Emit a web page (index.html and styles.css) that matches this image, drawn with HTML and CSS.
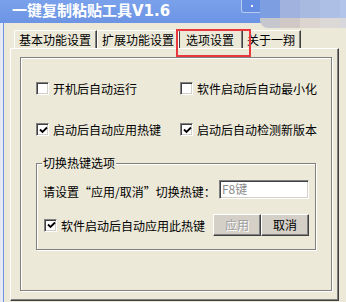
FILE: index.html
```html
<!DOCTYPE html>
<html lang="zh-CN">
<head>
    <meta charset="UTF-8">
    <title>一键复制粘贴工具V1.6</title>
    <link rel="stylesheet" href="styles.css">
</head>
<body>
    <div class="window">
        <div class="titlebar">
            <span class="title">一键复制粘贴工具V1.6</span>
            <span class="tb-btn"><i></i></span>
        </div>

        <!-- pixelated corner of the screenshot -->
        <div class="mosaic">
            <span class="m1"></span><span class="m2"></span><span class="m3"></span><span class="m4"></span><span class="m5"></span>
            <span class="m6"></span><span class="m7"></span><span class="m8"></span><span class="m9"></span><span class="m10"></span>
        </div>

        <div class="frame">
            <div class="tabs">
                <div class="tab">基本功能设置</div>
                <div class="tab">扩展功能设置</div>
                <div class="tab active">选项设置</div>
                <div class="tab">关于一翔</div>
            </div>

            <div class="panel">
                <div class="inner">
                    <div class="opts">
                        <label class="chk"><span class="box"></span>开机后自动运行</label>
                        <label class="chk"><span class="box"></span>软件启动后自动最小化</label>
                        <label class="chk"><span class="box checked"><svg viewBox="0 0 9 9"><path d="M1 3.5 L3.5 6 L8 1.5"/></svg></span>启动后自动应用热键</label>
                        <label class="chk"><span class="box checked"><svg viewBox="0 0 9 9"><path d="M1 3.5 L3.5 6 L8 1.5"/></svg></span>启动后自动检测新版本</label>
                    </div>

                    <fieldset class="group">
                        <legend>切换热键选项</legend>
                        <div class="hotkey-row">
                            <span class="hotkey-label">请设置“应用/取消”切换热键：</span>
                            <span class="input">F8键</span>
                        </div>
                        <div class="apply-row">
                            <label class="chk"><span class="box checked"><svg viewBox="0 0 9 9"><path d="M1 3.5 L3.5 6 L8 1.5"/></svg></span>软件启动后自动应用此热键</label>
                            <div class="btns">
                                <button class="btn" disabled>应用</button>
                                <button class="btn">取消</button>
                            </div>
                        </div>
                    </fieldset>
                </div>
            </div>
        </div>
    </div>
</body>
</html>
```

FILE: styles.css
```css
* {
    box-sizing: border-box;
}

body {
    margin: 0;
    font-family: "Noto Sans CJK SC", sans-serif;
    font-size: 12px;
    color: #000;
    background: #ece9d8;
}

.window {
    position: relative;
    width: 346px;
    height: 302px;
    display: flex;
    flex-direction: column;
    overflow: hidden;
    background: #ece9d8;
}

/* title bar */
.titlebar {
    height: 23px;
    display: flex;
    align-items: flex-start;
    padding-left: 12px;
    background: linear-gradient(#7aa1ea, #6c94e4);
}

.title {
    font-family: "DejaVu Sans", "Noto Sans CJK SC", sans-serif;
    font-weight: bold;
    font-size: 15px;
    line-height: 22px;
    color: #fff;
}

.tb-btn {
    position: relative;
    width: 20px;
    height: 13px;
    margin-left: auto;
    margin-right: 85px;
    border: 1px solid #b8ccf2;
    border-top: 0;
    border-bottom-left-radius: 3px;
    background: #658de2;
}

.tb-btn i {
    position: absolute;
    left: 9px;
    top: 5px;
    width: 2px;
    height: 2px;
    background: #fff;
}

.mosaic {
    position: absolute;
    top: 0;
    right: 0;
    width: 86px;
    display: grid;
    grid-template-columns: 20px 20px 20px 20px 6px;
    grid-template-rows: 18px 10px;
}

.m1 { background: #7d9fe2; }
.m2 { background: #a1b2de; }
.m3 { background: #a8badf; }
.m4 { background: #adbfe5; }
.m5 { background: #b3c4ea; }
.m6 { background: #c6c7cd; border-bottom-left-radius: 8px; }
.m7 { background: #cfc8c5; }
.m8 { background: #dcd4cf; }
.m9 { background: #dcd8d6; }
.m10 { background: #d7d7dc; }

/* window body */
.frame {
    flex: 1;
    display: flex;
    flex-direction: column;
    border-left: 3px solid #e6e9f6;
    box-shadow: inset 1px 0 0 #7090e0;
}

.tabs {
    display: flex;
    margin: 7px 0 0 11px;
    height: 18px;
}

.tab {
    position: relative;
    height: 18px;
    line-height: 17px;
    padding: 0 5px 0 4px;
    border-top: 1px solid #fff;
    border-left: 1px solid #fff;
    border-right: 1px solid #404040;
    border-top-left-radius: 2px;
    box-shadow: inset -1px 0 0 #808080;
    white-space: nowrap;
}

.tab.active {
    margin: 0 -1px 0 -2px;
    padding: 0 8px 0 7px;
    z-index: 1;
}

/* red highlight drawn on the screenshot */
.tab.active::after {
    content: "";
    position: absolute;
    left: -3px;
    top: -2px;
    width: 71px;
    height: 24px;
    border: 2px solid #e8383d;
}

.panel {
    width: 329px;
    height: 253px;
    margin-left: 7px;
    display: flex;
    flex-direction: column;
    padding: 8px 6px 9px 9px;
    border-top: 1px solid #fff;
    border-left: 1px solid #fff;
    border-right: 1px solid #404040;
    border-bottom: 1px solid #404040;
    box-shadow: inset -1px -1px 0 #808080;
}

.inner {
    flex: 1;
    padding: 24px 0 0 15px;
    border: 1px solid #808080;
    box-shadow: inset 1px 1px 0 #fff, 1px 1px 0 #fff;
}

.opts {
    display: grid;
    grid-template-columns: 144px auto;
    row-gap: 28px;
}

.chk {
    display: flex;
    align-items: center;
    height: 13px;
    line-height: 13px;
    white-space: nowrap;
}

.box {
    width: 13px;
    height: 13px;
    margin-right: 4px;
    flex: none;
    display: flex;
    align-items: center;
    justify-content: center;
    background: #fff;
    border: 1px solid;
    border-color: #808080 #fff #fff #808080;
    box-shadow: inset 1px 1px 0 #404040, inset -1px -1px 0 #d4d0c8;
}

.box svg {
    width: 9px;
    height: 9px;
    margin: 1px 0 0 1px;
}

.box svg path {
    fill: none;
    stroke: #000;
    stroke-width: 1.8;
}

/* hotkey group */
.group {
    width: 280px;
    margin: 20px 0 0 0;
    padding: 10px 6px 13px 6px;
    min-width: 0;
    border: 1px solid #808080;
    box-shadow: inset 1px 1px 0 #fff, 1px 1px 0 #fff;
}

.group legend {
    padding: 0 1px;
    margin-left: -1px;
    line-height: 14px;
    background: #ece9d8;
}

.hotkey-row {
    display: flex;
    justify-content: space-between;
    height: 19px;
}

.hotkey-label {
    align-self: flex-end;
    line-height: 14px;
    white-space: nowrap;
}

.input {
    width: 90px;
    height: 19px;
    padding-left: 2px;
    line-height: 16px;
    color: #8c8c8c;
    background: #fff;
    border: 1px solid;
    border-color: #808080 #fff #fff #808080;
    box-shadow: inset 1px 1px 0 #404040, inset -1px -1px 0 #d4d0c8;
}

.apply-row {
    display: flex;
    align-items: center;
    justify-content: space-between;
    margin-top: 15px;
    height: 22px;
    padding-left: 1px;
}

.btns {
    display: flex;
}

.btn {
    width: 48px;
    height: 22px;
    padding: 0;
    font-family: "Noto Sans CJK SC", sans-serif;
    font-size: 12px;
    line-height: 18px;
    color: #000;
    background: #d4d0c8;
    border: 1px solid;
    border-color: #fff #404040 #404040 #fff;
    box-shadow: inset -1px -1px 0 #808080;
}

.btn:disabled {
    color: #a0a0a0;
    text-shadow: 1px 1px 0 #fff;
}
```
